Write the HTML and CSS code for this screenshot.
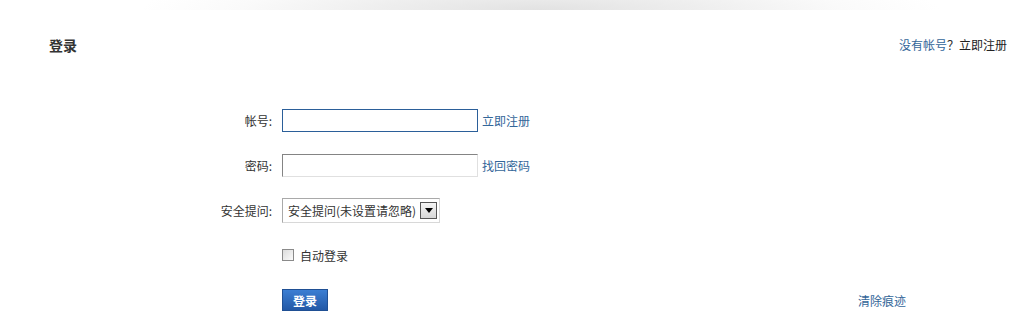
FILE: index.html
```html
<!DOCTYPE html>
<html lang="zh-CN">
<head>
<meta charset="utf-8">
<title>登录</title>
<link rel="stylesheet" href="styles.css">
</head>
<body>
<div class="shadow"></div>
<div class="header">
  <h1 class="title">登录</h1>
  <div class="reg"><a class="blue" href="#">没有帐号</a>？<a class="dark" href="#">立即注册</a></div>
</div>
<form class="form">
  <div class="row">
    <label class="label">帐号:</label>
    <div class="field"><input class="input focus" type="text"><a class="link" href="#">立即注册</a></div>
  </div>
  <div class="row">
    <label class="label">密码:</label>
    <div class="field"><input class="input" type="password"><a class="link" href="#">找回密码</a></div>
  </div>
  <div class="row">
    <label class="label">安全提问:</label>
    <div class="field">
      <div class="select"><span class="sel-text">安全提问(未设置请忽略)</span><span class="sel-btn"><span class="tri"></span></span></div>
    </div>
  </div>
  <div class="row">
    <span class="label"></span>
    <div class="field"><span class="check"></span><span class="check-text">自动登录</span></div>
  </div>
  <div class="row">
    <span class="label"></span>
    <div class="field wide"><button class="btn" type="button">登录</button><a class="link clear" href="#">清除痕迹</a></div>
  </div>
</form>
</body>
</html>
```

FILE: styles.css
```css
* { box-sizing: border-box; }
html, body { margin: 0; padding: 0; background: #fff; }
body {
  font-family: "Noto Sans CJK SC", "Microsoft YaHei", sans-serif;
  font-size: 12px;
  color: #333;
  width: 1027px;
  height: 336px;
  overflow: hidden;
}
a { text-decoration: none; }
.shadow {
  height: 10px;
  background: radial-gradient(ellipse 400px 40px at 540px 10px, #e2e2e2 0%, #eeeeee 40%, #fafafa 75%, #fff 100%);
}
.header {
  display: flex;
  justify-content: space-between;
  align-items: center;
  height: 20px;
  margin-top: 25px;
  padding: 0 20px 0 49px;
}
.title {
  margin: 0;
  font-size: 14px;
  font-weight: bold;
  color: #333;
  line-height: 20px;
}
.reg { line-height: 20px; color: #333; }
.blue { color: #336699; }
.dark { color: #222; }
.form {
  margin: 50px 0 0 0;
  width: 906px;
  display: flex;
  flex-direction: column;
  gap: 15px;
}
.row {
  display: flex;
  align-items: center;
  height: 30px;
  gap: 10px;
}
.label {
  width: 272px;
  text-align: right;
  color: #333;
}
.field {
  display: flex;
  align-items: center;
}
.field.wide { flex: 1; }
.input {
  width: 196px;
  height: 23px;
  margin: 0;
  padding: 0 4px;
  border: 1px solid;
  border-color: #848484 #e0e0e0 #e0e0e0 #848484;
  background: #fff;
  outline: none;
  font: inherit;
}
.input.focus { border-color: #2b5f99; }
.link {
  color: #336699;
  margin-left: 4px;
}
.select {
  display: flex;
  align-items: center;
  justify-content: space-between;
  width: 158px;
  height: 25px;
  border: 1px solid #b5b5b5;
  border-color: #a9a9a9 #d8d8d8 #d8d8d8 #a9a9a9;
  padding: 0 2px 0 5px;
  color: #333;
}
.sel-btn {
  display: flex;
  align-items: center;
  justify-content: center;
  width: 17px;
  height: 17px;
  border: 1px solid #555;
  background: linear-gradient(#f4f4f4, #d6d6d6);
}
.tri {
  width: 0;
  height: 0;
  border-left: 4px solid transparent;
  border-right: 4px solid transparent;
  border-top: 5px solid #000;
}
.check {
  width: 12px;
  height: 12px;
  border: 1px solid #8a8a8a;
  background: linear-gradient(135deg, #dcdcdc, #fbfbfb);
}
.check-text { margin-left: 6px; color: #333; }
.btn {
  width: 46px;
  height: 22px;
  padding: 0;
  border: 1px solid #1f4f94;
  background: linear-gradient(#3b7ed3, #2358a6);
  color: #fff;
  font: inherit;
  font-weight: bold;
  cursor: pointer;
}
.clear { margin-left: auto; }
```
